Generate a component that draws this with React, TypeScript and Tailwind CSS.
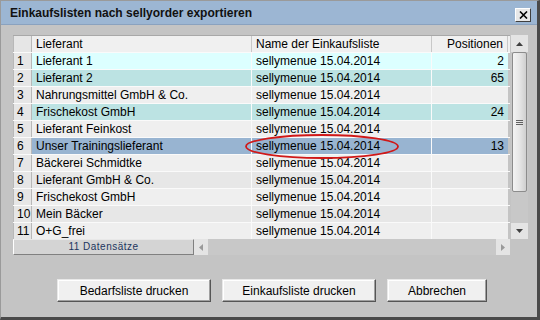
const ROWS = [
  { n: 1, lief: 'Lieferant 1', pos: '2', bg: 'bg-[#dcffff]' },
  { n: 2, lief: 'Lieferant 2', pos: '65', bg: 'bg-[#bce3e3]' },
  { n: 3, lief: 'Nahrungsmittel GmbH & Co.', pos: '', bg: 'bg-[#efefef]' },
  { n: 4, lief: 'Frischekost GmbH', pos: '24', bg: 'bg-[#bce3e3]' },
  { n: 5, lief: 'Lieferant Feinkost', pos: '', bg: 'bg-[#efefef]' },
  { n: 6, lief: 'Unser Trainingslieferant', pos: '13', bg: 'bg-[#98b4d1]' },
  { n: 7, lief: 'Bäckerei Schmidtke', pos: '', bg: 'bg-[#efefef]' },
  { n: 8, lief: 'Lieferant GmbH & Co.', pos: '', bg: 'bg-[#e7e7e7]' },
  { n: 9, lief: 'Frischekost GmbH', pos: '', bg: 'bg-[#efefef]' },
  { n: 10, lief: 'Mein Bäcker', pos: '', bg: 'bg-[#e7e7e7]' },
  { n: 11, lief: 'O+G_frei', pos: '', bg: 'bg-[#efefef]' },
]

function Btn({ label, w }: { label: string; w: string }) {
  return (
    <button
      className={`${w} h-[23px] bg-[#f0f0f0] border border-t-[#e8e8e8] border-l-[#e8e8e8] border-r-[#555] border-b-[#555] shadow-[inset_-1px_-1px_0_#a0a0a0,inset_1px_1px_0_#fff] text-[12px] text-black`}
    >
      {label}
    </button>
  )
}

export default function App() {
  return (
    <div className="w-[540px] h-[320px] bg-[#c4c4c4] border-t border-l border-t-[#9a9a9a] border-l-[#9a9a9a] border-r-[3px] border-b-[3px] border-r-[#4a4a4a] border-b-[#4a4a4a] flex flex-col font-['Liberation_Sans',Arial,sans-serif] text-[12px] text-black">
      {/* Title bar */}
      <div className="relative h-[24px] bg-[#9cb6d3] border-b border-[#8aa2bf] flex items-center pl-[9px]">
        <span className="font-bold text-[12px] text-[#111]">Einkaufslisten nach sellyorder exportieren</span>
        <div className="absolute right-[6px] top-[7px] w-[16px] h-[14px] bg-[#e8e8e8] border border-t-white border-l-white border-r-[#404040] border-b-[#404040] flex items-center justify-center">
          <svg width="9" height="8" viewBox="0 0 9 8">
            <path d="M1 0.5 L8 7.5 M8 0.5 L1 7.5" stroke="#000" strokeWidth="1.6" />
          </svg>
        </div>
      </div>

      {/* Table */}
      <div className="relative ml-[12px] mt-[10px] flex">
        <div className="w-[497px] flex flex-col">
          {/* header */}
          <div className="flex h-[17px] bg-[#f0f0f0] border-t border-[#a8a8a8]">
            <div className="w-[19px] border-l border-r border-[#b8b8b8] bg-[#e6e6e6]" />
            <div className="w-[220px] pl-[4px] leading-[16px] border-r border-[#c8c8c8]">Lieferant</div>
            <div className="w-[180px] pl-[4px] leading-[16px] border-r border-[#c8c8c8]">Name der Einkaufsliste</div>
            <div className="w-[76px] pr-[4px] leading-[16px] text-right border-r border-[#c8c8c8]">Positionen</div>
          </div>
          {ROWS.map(r => (
            <div key={r.n} className="flex h-[17px] border-t border-[#fafafa]">
              <div className="w-[19px] pl-[3px] leading-[16px] bg-[#e6e6e6] border-l border-r border-[#b8b8b8]">{r.n}</div>
              <div className={`w-[220px] pl-[4px] leading-[16px] border-r border-[#fafafa] ${r.bg}`}>{r.lief}</div>
              <div className={`w-[180px] pl-[4px] leading-[16px] border-r border-[#fafafa] ${r.bg}`}>sellymenue 15.04.2014</div>
              <div className={`w-[76px] pr-[4px] leading-[16px] text-right ${r.bg}`}>{r.pos}</div>
            </div>
          ))}
          {/* status + horizontal scroll */}
          <div className="flex h-[16px]">
            <div className="w-[181px] bg-[#d4d4d4] border border-t-[#e8e8e8] border-l-white border-r-[#808080] border-b-[#808080] text-[10px] tracking-[0.5px] text-[#1c355e] text-center leading-[14px]">
              11 Datensätze
            </div>
            <div className="w-[14px] bg-[#e4e4e4] flex items-center justify-center">
              <svg width="4" height="7" viewBox="0 0 4 7"><path d="M4 0 L0 3.5 L4 7 Z" fill="#9a9a9a" /></svg>
            </div>
            <div className="flex-1 bg-[#c8c8c8]" />
            <div className="w-[14px] bg-[#e4e4e4] flex items-center justify-center">
              <svg width="4" height="7" viewBox="0 0 4 7"><path d="M0 0 L4 3.5 L0 7 Z" fill="#9a9a9a" /></svg>
            </div>
          </div>
        </div>

        {/* vertical scrollbar */}
        <div className="w-[17px] ml-[1px] h-[204px] flex flex-col bg-[#c8c8c8]">
          <div className="h-[17px] bg-[#e4e4e4] flex items-center justify-center">
            <svg width="7" height="4" viewBox="0 0 7 4"><path d="M0 4 L3.5 0 L7 4 Z" fill="#404040" /></svg>
          </div>
          <div className="h-[140px] mx-[1px] rounded-[2px] border border-[#8c8c8c] bg-gradient-to-r from-[#f4f4f4] via-[#e6e6e6] to-[#cfcfcf] flex items-center justify-center">
            <div className="flex flex-col gap-[1px]">
              <div className="w-[7px] h-[1px] bg-[#606060]" />
              <div className="w-[7px] h-[1px] bg-[#606060]" />
              <div className="w-[7px] h-[1px] bg-[#606060]" />
            </div>
          </div>
          <div className="flex-1" />
          <div className="h-[16px] bg-[#e4e4e4] flex items-center justify-center">
            <svg width="7" height="4" viewBox="0 0 7 4"><path d="M0 0 L3.5 4 L7 0 Z" fill="#404040" /></svg>
          </div>
        </div>

        {/* red annotation ellipse */}
        <svg className="absolute left-[231px] top-[98px] pointer-events-none" width="156" height="27" viewBox="0 0 156 27">
          <ellipse cx="78" cy="13.5" rx="76" ry="11.5" fill="none" stroke="#d01818" strokeWidth="1.8" />
        </svg>
      </div>

      {/* buttons */}
      <div className="flex mt-[24px] ml-[56px] gap-[11px]">
        <Btn label="Bedarfsliste drucken" w="w-[154px]" />
        <Btn label="Einkaufsliste drucken" w="w-[154px]" />
        <Btn label="Abbrechen" w="w-[100px]" />
      </div>
    </div>
  )
}
